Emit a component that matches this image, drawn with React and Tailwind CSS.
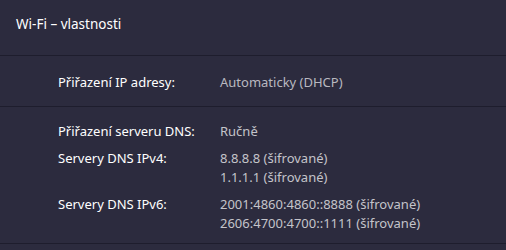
import React from 'react';

const rows = [
  { label: 'Přiřazení serveru DNS:', values: ['Ručně'] },
  { label: 'Servery DNS IPv4:', values: ['8.8.8.8 (šifrované)', '1.1.1.1 (šifrované)'] },
  { label: 'Servery DNS IPv6:', values: ['2001:4860:4860::8888 (šifrované)', '2606:4700:4700::1111 (šifrované)'] },
];

const App = () => {
  return (
    <div
      className="w-[506px] h-[250px] bg-[#2c2b3e] text-white overflow-hidden"
      style={{ fontFamily: '"Noto Sans", "Open Sans", sans-serif' }}
    >
      {/* Header */}
      <div className="h-[56px] px-4 pt-[15px] text-[13.5px] leading-[19px] border-b border-[#1e1d2d]">
        Wi-Fi – vlastnosti
      </div>

      {/* IP assignment */}
      <div className="h-[51px] flex items-center pl-[58px] pt-[2px] text-[13px] leading-[19px] border-b border-[#1e1d2d]">
        <span className="w-[162px]">Přiřazení IP adresy:</span>
        <span className="text-[#b9b9c0]">Automaticky (DHCP)</span>
      </div>

      {/* DNS */}
      <div className="h-[137px] pt-[15px] pl-[58px] flex flex-col gap-2 text-[13px] leading-[19px] border-b border-[#1e1d2d]">
        {rows.map((row) => (
          <div key={row.label} className="flex">
            <span className="w-[162px]">{row.label}</span>
            <div className="flex flex-col text-[#c4c4ca]">
              {row.values.map((v) => (
                <span key={v}>{v}</span>
              ))}
            </div>
          </div>
        ))}
      </div>
    </div>
  );
};

export default App;
